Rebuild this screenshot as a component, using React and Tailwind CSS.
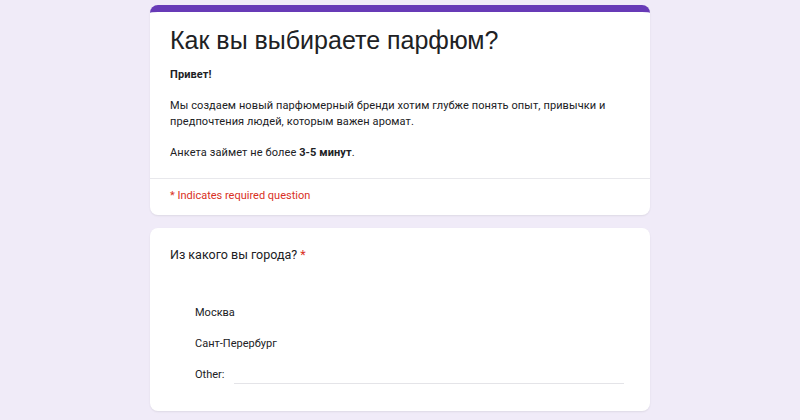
export default function App() {
  return (
    <div className="min-h-screen bg-[#f0ebf8] pt-[5px] font-['Roboto',sans-serif] text-[#202124]">
      <div className="mx-auto w-[500px] overflow-hidden rounded-lg border-t-[7px] border-[#673ab7] bg-white shadow-[0_1px_2px_rgba(0,0,0,0.08)]">
        <div className="px-5 pt-[10px] pb-[17px]">
          <h1 className="font-['Liberation_Sans',Arial,sans-serif] text-[25px] leading-[36px] text-[#202124]">
            Как вы выбираете парфюм?
          </h1>
          <div className="mt-[9px] text-[11px] leading-[16px] tracking-[0.1px]">
            <p className="font-bold">Привет!</p>
            <p className="mt-[15px]">
              Мы создаем новый парфюмерный бренди хотим глубже понять опыт, привычки и предпочтения людей, которым важен аромат.
            </p>
            <p className="mt-[15px]">
              Анкета займет не более <span className="font-bold">3-5 минут</span>.
            </p>
          </div>
        </div>
        <div className="border-t border-[#e8e8ec] px-5 pt-[9px] pb-[11px] text-[11px] leading-[16px] text-[#d93025]">
          * Indicates required question
        </div>
      </div>

      <div className="mx-auto mt-[13px] w-[500px] rounded-lg bg-white px-5 pt-[18px] pb-[28px] shadow-[0_1px_2px_rgba(0,0,0,0.08)]">
        <div className="text-[12.5px] leading-[18px]">
          Из какого вы города? <span className="text-[#d93025]">*</span>
        </div>
        <div className="mt-[41px] flex flex-col gap-[15px] pl-[25px] text-[11px] leading-[16px]">
          <div>Москва</div>
          <div>Сант-Перербург</div>
          <div className="flex items-end gap-[10px]">
            <span>Other:</span>
            <div className="mb-[-1px] h-[1px] w-[390px] bg-[#e4e4e8]" />
          </div>
        </div>
      </div>
    </div>
  );
}
